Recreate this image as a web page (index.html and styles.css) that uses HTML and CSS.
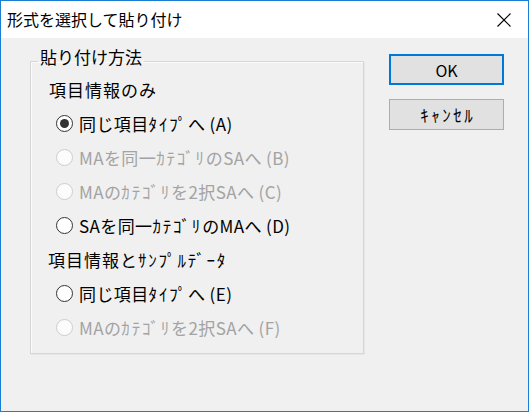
FILE: index.html
```html
<!DOCTYPE html>
<html lang="ja">
<head>
<meta charset="utf-8">
<title>形式を選択して貼り付け</title>
<link rel="stylesheet" href="styles.css">
</head>
<body>
<div class="window">
  <div class="titlebar">
    <span class="title">形式を選択して貼り付け</span>
    <span class="close" aria-label="閉じる">
      <svg width="14" height="14" viewBox="0 0 14 14"><path d="M0.5 0.5 L13.5 13.5 M13.5 0.5 L0.5 13.5" stroke="#000" stroke-width="1.1" fill="none"/></svg>
    </span>
  </div>
  <div class="content">
    <fieldset class="group">
      <legend class="legend">貼り付け方法</legend>
      <div class="rows">
        <div class="row section">項目情報のみ</div>
        <div class="row option"><span class="radio checked"></span><span class="label">同じ項目<span class="hw">ﾀｲﾌﾟ</span>へ (A)</span></div>
        <div class="row option disabled"><span class="radio"></span><span class="label">MAを同一<span class="hw">ｶﾃｺﾞﾘ</span>のSAへ (B)</span></div>
        <div class="row option disabled"><span class="radio"></span><span class="label">MAの<span class="hw">ｶﾃｺﾞﾘ</span>を2択SAへ (C)</span></div>
        <div class="row option"><span class="radio"></span><span class="label">SAを同一<span class="hw">ｶﾃｺﾞﾘ</span>のMAへ (D)</span></div>
        <div class="row section alt">項目情報と<span class="hw">ｻﾝﾌﾟﾙﾃﾞｰﾀ</span></div>
        <div class="row option"><span class="radio"></span><span class="label">同じ項目<span class="hw">ﾀｲﾌﾟ</span>へ (E)</span></div>
        <div class="row option disabled"><span class="radio"></span><span class="label">MAの<span class="hw">ｶﾃｺﾞﾘ</span>を2択SAへ (F)</span></div>
      </div>
    </fieldset>
    <div class="buttons">
      <button class="btn default">OK</button>
      <button class="btn cancel">ｷｬﾝｾﾙ</button>
    </div>
  </div>
</div>
</body>
</html>
```
FILE: styles.css
```css
html, body {
  margin: 0;
  padding: 0;
}
body {
  font-family: "Noto Sans CJK JP", "Noto Sans", sans-serif;
  color: #000;
  background: #f0f0f0;
}
.window {
  width: 529px;
  height: 412px;
  box-sizing: border-box;
  border: 1px solid #1a7fd4;
  background: #f0f0f0;
  display: flex;
  flex-direction: column;
}
.titlebar {
  height: 37px;
  background: #fff;
  display: flex;
  align-items: center;
  justify-content: space-between;
  padding: 0 17px 0 6px;
  flex: none;
}
.title {
  font-size: 16px;
  line-height: 20px;
  margin-top: -1px;
}
.close {
  display: flex;
  width: 14px;
  height: 14px;
  margin-top: 1px;
}
.content {
  display: flex;
  align-items: flex-start;
  padding: 10px 0 0 29px;
}
.group {
  margin: 0;
  width: 334px;
  height: 306px;
  box-sizing: border-box;
  padding: 0;
  border: 1px solid #d6d6d6;
  box-shadow: 1px 1px 0 #e6e6e6, inset 1px 1px 0 #fafafa;
}
.legend {
  font-size: 17px;
  line-height: 18px;
  padding: 0 2px 8px 2px;
  margin-left: 7px;
}
.rows {
  margin-top: -2px;
  display: flex;
  flex-direction: column;
}
.row {
  height: 34px;
  display: flex;
  align-items: center;
  font-size: 17px;
  letter-spacing: 0.4px;
  white-space: pre;
}
.hw {
  letter-spacing: 1.8px;
}
.section {
  padding-left: 18px;
  letter-spacing: 1px;
}
.section.alt {
  padding-left: 17px;
}
.option {
  padding-left: 25px;
}
.radio {
  width: 17px;
  height: 17px;
  box-sizing: border-box;
  border: 1.5px solid #333;
  border-radius: 50%;
  background: #fff;
  display: flex;
  align-items: center;
  justify-content: center;
  margin-right: 6px;
  flex: none;
}
.radio.checked::after {
  content: "";
  width: 9px;
  height: 9px;
  border-radius: 50%;
  background: #333;
}
.disabled .radio {
  border-color: #cccccc;
  background: #fcfcfc;
}
.disabled .label {
  color: #a3a3a3;
}
.buttons {
  display: flex;
  flex-direction: column;
  gap: 14px;
  margin-left: 25px;
  margin-top: 6px;
}
.btn {
  width: 115px;
  height: 31px;
  box-sizing: border-box;
  font-family: "Noto Sans CJK JP", "Noto Sans", sans-serif;
  font-size: 16px;
  background: #e1e1e1;
  border: 1px solid #adadad;
  color: #000;
  padding: 0;
}
.btn.default {
  border: 2px solid #0078d7;
}
.btn.cancel {
  font-size: 17px;
  letter-spacing: 2.5px;
  text-indent: 2.5px;
}
```
